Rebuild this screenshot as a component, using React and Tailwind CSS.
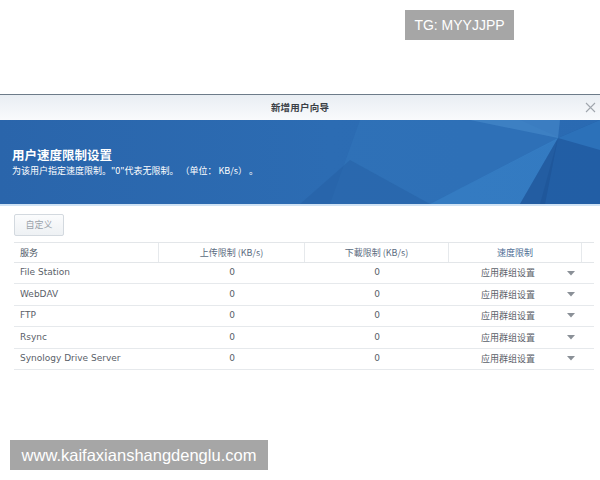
import React from "react";

const rows = ["File Station", "WebDAV", "FTP", "Rsync", "Synology Drive Server"];

function Arrow() {
  return (
    <svg width="8" height="5" viewBox="0 0 8 5" className="block">
      <path d="M0 0 L8 0 L4 4.5 Z" fill="#8a9097" />
    </svg>
  );
}

export default function App() {
  const cjk = { fontFamily: '"Noto Sans CJK SC", "Noto Sans", sans-serif' };
  const lat = { fontFamily: '"DejaVu Sans", Verdana, sans-serif' };
  return (
    <div className="relative w-[600px] h-[480px] bg-white overflow-hidden" style={cjk}>
      {/* watermark top */}
      <div className="absolute left-[405px] top-[10px] w-[109px] h-[30px] bg-[#a6a6a6] flex items-center justify-center text-white text-[14px]" style={{ fontFamily: '"Liberation Sans", Arial, sans-serif' }}>
        TG: MYYJJPP
      </div>

      <div className="mt-[94px] border-t border-[#6d7b89]">
        {/* title bar */}
        <div className="relative h-[25px] bg-gradient-to-b from-[#e9eef3] to-[#f9fafc] flex items-center justify-center">
          <span className="text-[9.5px] font-bold text-[#3a3f45] tracking-[0.2px]">新增用户向导</span>
          <svg className="absolute right-[4px] top-[7px]" width="11" height="11" viewBox="0 0 11 11">
            <path d="M1 1 L10 10 M10 1 L1 10" stroke="#a0a6ad" strokeWidth="1.1" />
          </svg>
        </div>

        {/* banner */}
        <div className="relative h-[84px] bg-[#2b67ad] overflow-hidden">
          <svg className="absolute inset-0" width="600" height="84" viewBox="0 0 600 84">
            <defs>
              <linearGradient id="bg" x1="0" y1="0" x2="1" y2="0">
                <stop offset="0" stopColor="#2a65ab" />
                <stop offset="0.55" stopColor="#2c6cb3" />
                <stop offset="1" stopColor="#2a6ab2" />
              </linearGradient>
            </defs>
            <rect width="600" height="84" fill="url(#bg)" />
            <polygon points="360,0 520,0 560,18 430,84 330,84" fill="#3277bd" opacity="0.45" />
            <polygon points="470,0 560,0 558,18" fill="#4b8fd0" opacity="0.5" />
            <polygon points="558,18 600,0 600,84 540,84" fill="#1f5a9f" opacity="0.7" />
            <polygon points="558,18 600,0 600,30" fill="#2f75be" opacity="0.8" />
            <polygon points="430,84 558,18 520,84" fill="#3a86cc" opacity="0.6" />
            <polygon points="300,84 350,40 430,84" fill="#245d9f" opacity="0.4" />
            <polygon points="558,18 520,84 545,84" fill="#1b4f92" opacity="0.5" />
          </svg>
          <div className="relative pl-[12px] pt-[26px] text-white">
            <div className="text-[12.5px] font-bold leading-[18px]">用户速度限制设置</div>
            <div className="text-[9px] leading-[13px]">为该用户指定速度限制。"0"代表无限制。 （单位： KB/s） 。</div>
          </div>
        </div>
        <div className="h-[2px] bg-[#cfe2f4]" />

        {/* content */}
        <div className="px-[14px]">
          <div className="mt-[8px] w-[50px] h-[22px] border border-[#d3d9df] rounded-[2px] bg-gradient-to-b from-[#fbfcfd] to-[#eef1f4] flex items-center justify-center text-[9px] text-[#9aa2aa]">
            自定义
          </div>

          <div className="mt-[6px] w-[580px] border-t border-[#e3e6e9]">
            <div className="flex h-[20px] border-b border-[#e3e6e9] text-[9px] items-stretch">
              <div className="w-[145px] flex items-center pl-[6px] text-[#4a5562] border-r border-[#e6e9ec]">服务</div>
              <div className="w-[146px] flex items-center justify-center text-[#5a6b80] border-r border-[#e6e9ec]">上传限制 (KB/s)</div>
              <div className="w-[144px] flex items-center justify-center text-[#5a6b80] border-r border-[#e6e9ec]">下載限制 (KB/s)</div>
              <div className="w-[133px] flex items-center justify-center text-[#4e6e96] border-r border-[#e6e9ec]">速度限制</div>
              <div className="flex-1" />
            </div>
            {rows.map((r) => (
              <div key={r} className="flex h-[21.4px] border-b border-[#e6e9ec] items-center text-[9px] text-[#5a6068]">
                <div className="w-[145px] pl-[6px]" style={lat}>{r}</div>
                <div className="w-[146px] text-center" style={lat}>0</div>
                <div className="w-[144px] text-center" style={lat}>0</div>
                <div className="w-[133px] flex items-center">
                  <div className="w-[118px] text-center">应用群组设置</div>
                  <Arrow />
                </div>
                <div className="flex-1" />
              </div>
            ))}
          </div>
        </div>
      </div>

      {/* watermark bottom */}
      <div className="absolute left-[10px] top-[440px] w-[258px] h-[30px] bg-[#a6a6a6] flex items-center justify-center text-white text-[16.5px]" style={{ fontFamily: '"Liberation Sans", Arial, sans-serif' }}>
        www.kaifaxianshangdenglu.com
      </div>
    </div>
  );
}
